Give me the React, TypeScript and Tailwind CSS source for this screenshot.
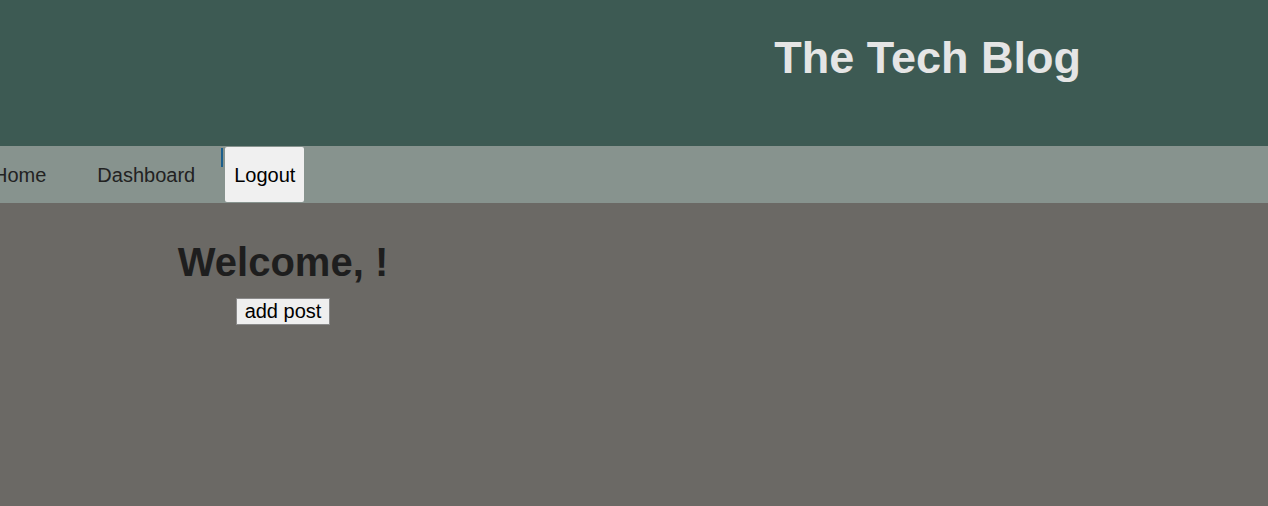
export default function App() {
  return (
    <div className="min-h-screen flex flex-col bg-[#6b6965] font-['Liberation_Sans',Arial,sans-serif]">
      {/* header */}
      <header className="h-[146px] bg-[#3d5a53] flex justify-end pr-[187px]">
        <h1 className="mt-[32px] text-[45px] leading-[51px] font-bold text-[#e5e5e5] h-fit">
          The Tech Blog
        </h1>
      </header>

      {/* nav */}
      <nav className="h-[57px] bg-[#87938e] flex items-stretch text-[20px] leading-[23px] ml-[-7px]">
        <a className="flex items-center pt-[2px] text-[#222]">Home</a>
        <a className="flex items-center pt-[2px] ml-[51px] text-[#222]">Dashboard</a>
        <span className="w-[2px] h-[19px] mt-[2px] ml-[26px] bg-[#1c5f8c] self-start" />
        <a className="flex items-center pt-[2px] ml-[2px] my-[1px] px-[9px] bg-[#f0f0f0] text-black rounded-[2px]">
          Logout
        </a>
      </nav>

      {/* main */}
      <main className="flex-1">
        <div className="w-[566px] flex flex-col items-center">
          <h2 className="mt-[36px] text-[40px] leading-[46px] font-bold text-[#1e1e1e]">
            Welcome, !
          </h2>
          <button className="mt-[13px] h-[27px] px-[8px] text-[20px] leading-[23px] bg-[#efefef] border border-[#8a8a8a] text-black">
            add post
          </button>
        </div>
      </main>
    </div>
  );
}
